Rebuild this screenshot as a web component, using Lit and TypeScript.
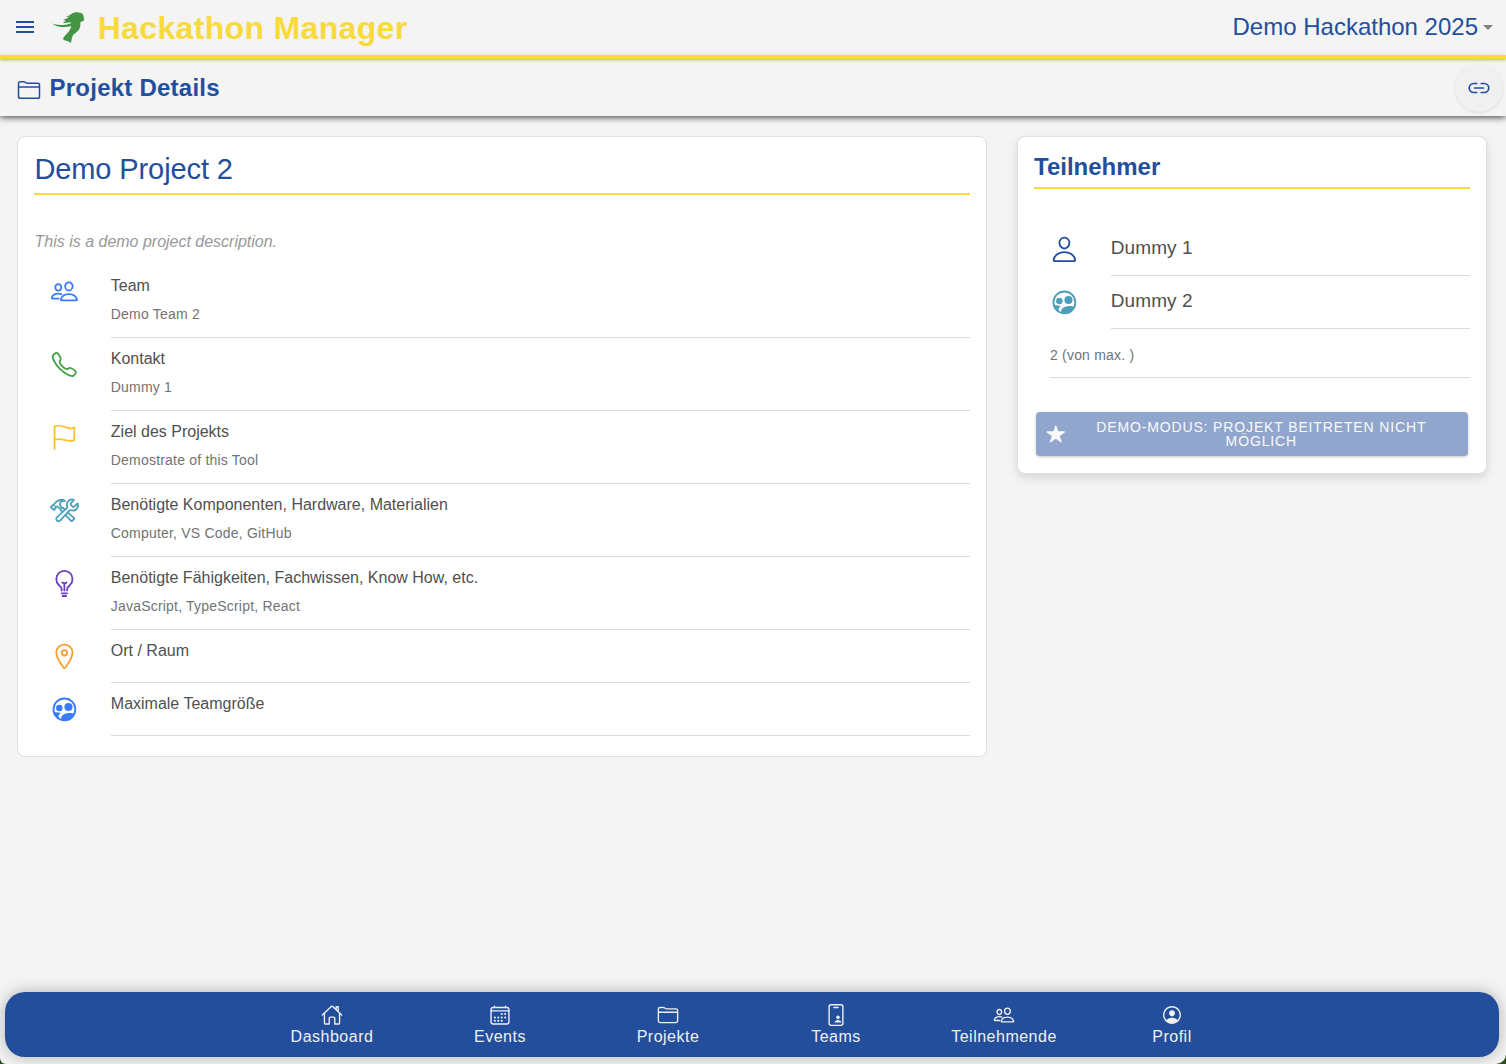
import { LitElement, html, css, svg } from "lit";
import { customElement, property } from "lit/decorators.js";

const people = svg`<path d="M402 168c-2.93 40.67-33.1 72-66 72s-63.12-31.32-66-72c-3-42.31 26.37-72 66-72s69 30.46 66 72z"/><path d="M336 304c-65.17 0-127.84 32.37-143.54 95.41-2.08 8.34 3.15 16.59 11.72 16.59h263.65c8.57 0 13.77-8.25 11.72-16.59C463.85 335.36 401.18 304 336 304z"/><path d="M200 185.94c-2.34 32.48-26.72 58.06-53 58.06s-50.7-25.57-53-58.06C91.61 152.15 115.34 128 147 128s55.39 24.77 53 57.94z"/><path d="M206 306c-18.05-8.27-37.93-11.45-59-11.45-52 0-102.1 25.85-114.65 76.2-1.65 6.66 2.53 13.25 9.37 13.25H154"/>`;

const icons: Record<string, unknown> = {
  people,
  person: svg`<path d="M344 144c-3.92 52.87-44 96-88 96s-84.15-43.12-88-96c-4-55 35-96 88-96s92 42 88 96z"/><path d="M256 304c-87 0-175.3 48-191.64 138.6C62.39 453.52 68.57 464 80 464h352c11.44 0 17.62-10.48 15.65-21.4C431.3 352 343 304 256 304z"/>`,
  call: svg`<path d="M451 374c-15.88-16-54.34-39.35-73-48.76-24.3-12.24-26.3-13.24-45.4.95-12.74 9.47-21.21 17.93-36.12 14.75s-47.31-21.11-75.68-49.39-47.34-61.62-50.53-76.48 5.41-23.23 14.79-36c13.22-18 12.22-21 .92-45.3-8.81-18.9-32.84-57-48.9-72.8C119.9 44 119.9 47 108.83 51.6A160.15 160.15 0 0083 65.37C67 76 58.12 84.83 51.91 98.1s-9 44.38 23.07 102.64 54.57 88.05 101.14 134.49S258.5 406.64 310.85 436c64.76 36.27 89.6 29.2 102.91 23s22.18-15 32.83-31a159.09 159.09 0 0013.8-25.8C465 391.17 468 391.17 451 374z"/>`,
  flag: svg`<path d="M80 464V68.14a8 8 0 014-6.9C91.81 56.66 112.92 48 160 48c64 0 145 48 192 48a199.53 199.53 0 0077.23-15.77 2 2 0 012.77 1.85v219.36a4 4 0 01-2.39 3.65C421.37 308.7 392.33 320 352 320c-48 0-128-32-192-32s-80 16-80 16"/>`,
  tools: svg`<path d="M436.67 184.11a27.17 27.17 0 01-38.3 0l-22.48-22.49a27.15 27.15 0 010-38.29l50.89-50.89a.85.85 0 00-.26-1.38C393.68 57.23 351.09 64.11 324.05 91c-25.88 25.69-27.35 64.27-17.87 98a27 27 0 01-7.67 27.14l-173 160.76a40.76 40.76 0 1057.57 57.54l162.15-173.3A27 27 0 01372 253.44c33.46 8.94 71.96 7.26 97.07-17.94 27.49-27.59 33.11-72.41 19.91-102.38a.89.89 0 00-1.43-.28z"/><path d="M224 284c-17.48-17-25.49-24.91-31-30.29a18.24 18.24 0 01-3.33-21.35 20.76 20.76 0 013.5-4.62l15.68-15.29a18.66 18.66 0 015.63-3.87 18.11 18.11 0 0120 3.62c5.45 5.29 15.43 15 33.41 32.52M317.07 291.3c40.95 38.1 90.62 83.27 110 99.41a13.46 13.46 0 01.94 19.92L394.63 444a14 14 0 01-20.29-.76c-16.53-19.18-61.09-67.11-99.27-107M17.34 193.5l29.41-28.74a4.71 4.71 0 013.41-1.35 4.85 4.85 0 013.41 1.41 9.86 9.86 0 008.19 2.77c3.83-.42 7.92-1.6 10.57-4.12 6-5.8-.94-17.23 4.34-24.54a207 207 0 0119.78-22.6c6-5.88 29.84-28.32 69.9-44.45A107.31 107.31 0 01206.67 64c22.59 0 40 10 46.26 15.67a89.54 89.54 0 0110.28 11.64A78.92 78.92 0 00254 88.69a68.82 68.82 0 00-20-1.26c-13.33 1.09-29.41 7.26-38 14-13.9 11-19.87 25.72-20.81 44.71-.68 14.12 2.72 22.1 36.1 55.49a6.6 6.6 0 01-.34 9.16l-18.22 18a6.88 6.88 0 01-9.54.09c-21.94-21.94-36.65-33.09-45-38.16s-15.07-6.5-18.3-6.85a30.85 30.85 0 00-18.27 3.87 11.39 11.39 0 00-2.64 2 14.14 14.14 0 00.42 20.08l1.71 1.6a4.63 4.63 0 010 6.64L71.73 246.6A4.71 4.71 0 0168.32 248a4.86 4.86 0 01-3.41-1.41l-47.57-46.49a4.88 4.88 0 010-6.6z"/>`,
  bulb: svg`<path d="M304 384v-24c0-29 31.54-56.43 52-76 28.84-27.57 44-64.61 44-108 0-80-63.73-144-144-144a143.6 143.6 0 00-144 144c0 41.84 15.81 81.39 44 108 20.35 19.21 52 46.7 52 76v24M224 480h64M208 432h96M256 384V256"/><path d="M294 240s-21.51 16-38 16-38-16-38-16"/>`,
  pin: svg`<path d="M256 48c-79.5 0-144 61.39-144 137 0 87 96 224.87 131.25 272.49a15.77 15.77 0 0025.5 0C304 409.89 400 272.07 400 185c0-75.61-64.5-137-144-137z"/><circle cx="256" cy="192" r="48"/>`,
  group: svg`<circle cx="256" cy="256" r="194"/><g class="solid"><circle cx="166" cy="232" r="58"/><circle cx="328" cy="214" r="72"/><path d="M60 308C96 302 150 304 194 318C160 342 146 366 156 396L166 436L110 400Z"/><path d="M212 450C196 430 192 396 210 372C240 334 290 318 340 318C384 318 416 322 444 336C420 400 370 440 320 460H240Z"/></g>`,
  folder: svg`<path d="M440 432H72a40 40 0 01-40-40V120a40 40 0 0140-40h75.89a40 40 0 0122.19 6.72l27.84 18.56a40 40 0 0022.19 6.72H440a40 40 0 0140 40v240a40 40 0 01-40 40zM32 192h448"/>`,
  home: svg`<path d="M80 212v236a16 16 0 0016 16h96V328a24 24 0 0124-24h80a24 24 0 0124 24v136h96a16 16 0 0016-16V212"/><path d="M480 256L266.89 52c-5-5.28-16.69-5.34-21.78 0L32 256M400 179V64h-48v69"/>`,
  calendar: svg`<rect x="48" y="80" width="416" height="384" rx="48"/><path d="M128 48v32M384 48v32M464 160H48"/><g class="solid"><circle cx="296" cy="232" r="24"/><circle cx="376" cy="232" r="24"/><circle cx="296" cy="312" r="24"/><circle cx="376" cy="312" r="24"/><circle cx="136" cy="312" r="24"/><circle cx="216" cy="312" r="24"/><circle cx="136" cy="392" r="24"/><circle cx="216" cy="392" r="24"/><circle cx="296" cy="392" r="24"/></g>`,
  badge: svg`<rect x="96" y="16" width="320" height="480" rx="48"/><path d="M208 80h96"/><g class="solid"><circle cx="302" cy="311" r="41"/><path d="M224 432c0-36 42-58 78-58s78 22 78 58z"/></g>`,
  profile: svg`<g class="solid"><path d="M258.9 48C141.92 46.42 46.42 141.92 48 258.9c1.56 112.19 92.91 203.54 205.1 205.1 117 1.6 212.48-93.9 210.88-210.88C462.44 140.91 371.09 49.56 258.9 48zm126.42 327.25a4 4 0 01-6.14-.32 124.27 124.27 0 00-32.35-29.59C321.37 329 289.11 320 256 320s-65.37 9-90.83 25.34a124.24 124.24 0 00-32.35 29.58 4 4 0 01-6.14.32A175.32 175.32 0 0180 259c-1.63-97.31 78.22-178.76 175.57-179S432 158.81 432 256a175.32 175.32 0 01-46.68 119.25z"/><path d="M256 144c-19.72 0-37.55 7.39-50.22 20.82s-19 32-17.57 51.93C191.11 256 221.52 288 256 288s64.83-32 67.79-71.24c1.48-19.74-4.8-38.14-17.68-51.82C293.39 151.44 275.59 144 256 144z"/></g>`,
  link: svg`<path stroke-width="36" d="M208 352h-64a96 96 0 010-192h64M304 160h64a96 96 0 010 192h-64M163.29 256h187.42"/>`,
  star: svg`<path class="solid" d="M394 480a16 16 0 01-9.39-3L256 383.76 127.39 477a16 16 0 01-24.55-18.08L153 310.35 23 221.2a16 16 0 019-29.2h160.38l48.4-148.95a16 16 0 0130.44 0l48.4 149H480a16 16 0 019.05 29.2L359 310.35l50.13 148.53A16 16 0 01394 480z"/>`,
};

@customElement("app-icon")
class AppIcon extends LitElement {
  @property() name = "";

  static styles = css`
    :host { display: block; width: 28.8px; height: 28.8px; flex: none; }
    svg { display: block; width: 100%; height: 100%; fill: none; stroke: currentColor; stroke-width: 32; stroke-linecap: round; stroke-linejoin: round; overflow: visible; }
    .solid { fill: currentColor; stroke: none; }
  `;

  render() {
    return html`<svg viewBox="0 0 512 512" aria-hidden="true">${icons[this.name]}</svg>`;
  }
}

const details = [
  { icon: "people", tone: "blue", label: "Team", value: "Demo Team 2" },
  { icon: "call", tone: "green", label: "Kontakt", value: "Dummy 1" },
  { icon: "flag", tone: "yellow", label: "Ziel des Projekts", value: "Demostrate of this Tool" },
  { icon: "tools", tone: "teal", label: "Benötigte Komponenten, Hardware, Materialien", value: "Computer, VS Code, GitHub" },
  { icon: "bulb", tone: "violet", label: "Benötigte Fähigkeiten, Fachwissen, Know How, etc.", value: "JavaScript, TypeScript, React" },
  { icon: "pin", tone: "orange", label: "Ort / Raum", value: "" },
  { icon: "group", tone: "blue", label: "Maximale Teamgröße", value: "" },
];

const members = [
  { icon: "person", tone: "navy", name: "Dummy 1" },
  { icon: "group", tone: "teal", name: "Dummy 2" },
];

const tabs = [
  { icon: "home", label: "Dashboard" },
  { icon: "calendar", label: "Events" },
  { icon: "folder", label: "Projekte" },
  { icon: "badge", label: "Teams" },
  { icon: "people", label: "Teilnehmende" },
  { icon: "profile", label: "Profil" },
];

@customElement("app-root")
class AppRoot extends LitElement {
  static styles = css`
    :host { display: block; height: 100vh; background: #304a22; font-family: "Liberation Sans", Arial, sans-serif; color: #505050; }
    * { box-sizing: border-box; }
    .page { height: 100%; display: flex; flex-direction: column; background: #f4f4f4; border-radius: 0 0 10px 6px; overflow: hidden; }
    .top { height: 59px; flex: none; display: flex; align-items: center; border-bottom: 4px solid #f8da3d; padding: 0 12px 0 16px; box-shadow: 0 1px 3px rgba(0,0,0,.3); z-index: 2; }
    .menu { width: 18px; height: 12px; display: flex; flex-direction: column; justify-content: space-between; margin-top: -1px; }
    .menu i { height: 2px; background: #234e9c; }
    .logo { width: 36.67px; height: 33.33px; margin: 1px 0 0 16px; fill: #439443; }
    .brand { margin: 0 0 0 11px; font-size: 32px; line-height: 38px; font-weight: 700; letter-spacing: .34px; color: #f8da3d; }
    .event { margin-left: auto; font-size: 24px; line-height: 28px; color: #234e9c; margin-top: -2px; }
    .caret { width: 0; height: 0; border: 5px solid transparent; border-top-color: #808080; border-bottom: 0; margin: -1px 1px 0 5px; }
    .bar { height: 57px; flex: none; display: flex; align-items: center; padding: 0 3px 0 17px; background: #f4f4f4; box-shadow: 0 1px 7px rgba(0,0,0,.8); z-index: 1; color: #234e9c; }
    .bar h1 { margin: 0 auto 0 8.5px; font-size: 24px; line-height: 28px; letter-spacing: .24px; }
    .bar app-icon { width: 24px; height: 24px; }
    .bar > app-icon { margin-top: 5px; }
    .fab { width: 48px; height: 48px; border-radius: 50%; display: flex; align-items: center; justify-content: center; background: #f0f0f0; box-shadow: 0 1px 3px rgba(0,0,0,.1); }
    .content { flex: 1; display: flex; align-items: flex-start; gap: 30px; padding: 20px 19px 0 17px; }
    .card { background: #fff; border: 1px solid #dfdfdf; border-radius: 8px; padding: 16px; }
    .main { width: 970px; height: 621px; }
    .side { width: 470px; height: 338px; box-shadow: 0 4px 10px rgba(0,0,0,.12); }
    .card h2 { margin: 0; color: #234e9c; border-bottom: 2px solid #f8da3d; }
    .main h2 { height: 42px; font-size: 29px; line-height: 32px; font-weight: 400; letter-spacing: -.1px; text-indent: .4px; }
    .side h2 { height: 36px; font-size: 24px; line-height: 28px; }
    .text { margin: 37px 0 14px .6px; font-size: 16px; line-height: 19px; font-style: italic; color: #999; letter-spacing: -.01px; }
    .item { display: flex; gap: 32px; padding-left: 16px; }
    .item app-icon { margin-top: 12px; }
    .body { flex: 1; min-height: 53px; border-bottom: 1px solid #dcdcdc; padding: 11px 0 14px; }
    .label { font-size: 16px; line-height: 20px; color: #505050; }
    .value { margin-top: 9px; font-size: 14px; line-height: 18px; color: #737373; letter-spacing: .2px; }
    .members { margin-top: 34px; }
    .name { font-size: 19px; line-height: 26px; padding: 12px 0 13px; letter-spacing: .08px; }
    .count { height: 49px; margin-left: 16px; border-bottom: 1px solid #dcdcdc; font-size: 14px; line-height: 53px; color: #737373; letter-spacing: .2px; }
    .join { width: 432px; height: 44px; margin: 34px 2px 0; padding: 0 10px; border: 0; border-radius: 4px; display: flex; align-items: center; background: #91a6cd; color: #fafafa; font: 14px/14px "Liberation Sans", Arial, sans-serif; letter-spacing: .86px; text-transform: uppercase; box-shadow: 0 1px 3px rgba(0,0,0,.22); }
    .join app-icon { width: 19.6px; height: 19.6px; }
    .join span { flex: 1; padding: 0 27px 0 26px; }
    .tabs { height: 65px; margin: 0 7px 7px 5px; border-radius: 20px; display: flex; justify-content: center; background: #234e9c; box-shadow: 0 0 16px rgba(0,0,0,.28); color: #f0f0f0; }
    .tab { width: 168px; padding-top: 12px; display: flex; flex-direction: column; align-items: center; font-size: 16px; line-height: 18px; letter-spacing: .5px; gap: 2px; }
    .tab app-icon { width: 22px; height: 22px; }
    .blue { color: #3a7bfd; }
    .green { color: #46a049; }
    .yellow { color: #f9c22e; }
    .teal { color: #4d9fb9; }
    .violet { color: #6a40bd; }
    .orange { color: #f5a02d; }
    .navy { color: #234e9c; }
  `;

  render() {
    return html`
      <div class="page">
        <header class="top">
          <div class="menu"><i></i><i></i><i></i></div>
          <svg class="logo" viewBox="150 35 110 100" aria-hidden="true">
            <path d="M154 71C164 77 180 78 196 76C204 75 210 73 215 70C207 69 198 70 188 72C191 69 194 67 197 65C195 63 191 62 189 62C197 60 204 56 209 51C204 53 200 53 198 52C208 50 212 45 219 41C225 38 233 38 238 40C246 40 250 45 251 52C252 56 251 59 253 62C250 65 246 67 242 67C240 72 242 78 240 84C238 94 229 99 220 106C215 112 215 121 213 131C207 126 200 126 194 123C190 121 188 119 190 116C194 108 205 100 210 91C212 87 213 83 214 80C204 82 195 84 184 83C172 82 162 77 154 71Z"/>
          </svg>
          <div class="brand">Hackathon Manager</div>
          <div class="event">Demo Hackathon 2025</div>
          <div class="caret"></div>
        </header>
        <div class="bar">
          <app-icon name="folder"></app-icon>
          <h1>Projekt Details</h1>
          <div class="fab"><app-icon name="link"></app-icon></div>
        </div>
        <main class="content">
          <section class="card main">
            <h2>Demo Project 2</h2>
            <p class="text">This is a demo project description.</p>
            ${details.map((d) => html`
              <div class="item">
                <app-icon class=${d.tone} name=${d.icon}></app-icon>
                <div class="body">
                  <div class="label">${d.label}</div>
                  ${d.value ? html`<div class="value">${d.value}</div>` : ""}
                </div>
              </div>`)}
          </section>
          <section class="card side">
            <h2>Teilnehmer</h2>
            <div class="members">
              ${members.map((m) => html`
                <div class="item">
                  <app-icon class=${m.tone} name=${m.icon}></app-icon>
                  <div class="body name">${m.name}</div>
                </div>`)}
            </div>
            <div class="count">2 (von max. )</div>
            <button class="join"><app-icon name="star"></app-icon><span>Demo-Modus: Projekt beitreten nicht möglich</span></button>
          </section>
        </main>
        <nav class="tabs">
          ${tabs.map((t) => html`<div class="tab"><app-icon name=${t.icon}></app-icon><span>${t.label}</span></div>`)}
        </nav>
      </div>`;
  }
}
